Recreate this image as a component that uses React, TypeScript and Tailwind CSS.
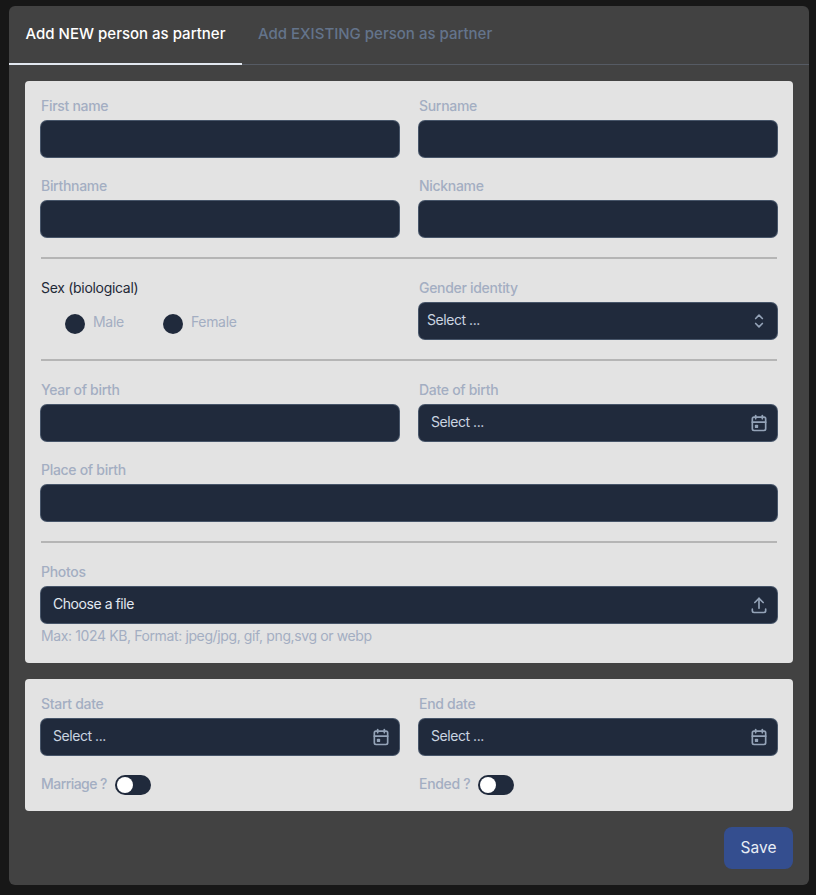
import { TbCalendarEvent, TbSelector, TbUpload } from "react-icons/tb"

const inputClass = "block h-9 w-full rounded-md bg-[#202a3c] ring-1 ring-[#475569]"

function Label({ children }: { children: React.ReactNode }) {
  return <label className="block h-5 text-sm leading-[18px] font-medium tracking-[-0.3px] text-[#a3aec2]">{children}</label>
}

function TextField({ label, className = "" }: { label: string; className?: string }) {
  return (
    <div className={className}>
      <Label>{label}</Label>
      <div className={`mt-1 ${inputClass}`} />
    </div>
  )
}

// select, date and file inputs all share this, only the icon changes
function IconField({
  label,
  text,
  icon,
  compact = false,
  light = false,
}: {
  label: string
  text: string
  icon: React.ReactNode
  compact?: boolean
  light?: boolean
}) {
  return (
    <div>
      <Label>{label}</Label>
      <div className={`mt-1 flex items-center justify-between pr-2 ${compact ? "pl-2" : "pl-3"} ${inputClass}`}>
        <span className={`pb-0.5 text-sm leading-5 tracking-[-0.45px] ${light ? "text-[#e2e8f0]" : "text-[#cbd5e1]"}`}>{text}</span>
        <span className="text-[#94a3b8]">{icon}</span>
      </div>
    </div>
  )
}

function Radio({ label }: { label: string }) {
  return (
    <div className="flex items-start gap-2">
      <span className="size-5 rounded-full bg-[#202a3c]" />
      <span className="-mt-0.5 text-sm leading-5 tracking-[-0.3px] text-[#a3aec2]">{label}</span>
    </div>
  )
}

function Toggle({ label, className = "" }: { label: string; className?: string }) {
  return (
    <div className="flex h-5 items-center gap-2">
      <span className={`h-5 text-sm leading-[18px] font-medium text-[#a3aec2] ${className}`}>{label}</span>
      <span className="flex h-5 w-9 items-center rounded-full bg-[#202a3c] px-0.5">
        <span className="size-4 rounded-full bg-white" />
      </span>
    </div>
  )
}

export default function App() {
  return (
    <div className="h-[895px] bg-[#171717] pt-1.5 pl-[9px] pr-[7px] font-['Inter',sans-serif]">
      <div className="h-[879px] rounded-md bg-[#424242]">
        <div className="flex h-[59px] border-b border-[#565b64]">
          <button className="h-[59px] w-[233px] border-b-2 border-[#e2e8f0] text-center text-[15px] font-medium text-white">
            Add NEW person as partner
          </button>
          <button className="h-[58px] pl-4 pb-0.5 text-[15px] font-medium text-[#64748b]">
            Add EXISTING person as partner
          </button>
        </div>

        <div className="flex flex-col gap-4 p-4">
          <div className="flex flex-col gap-5 rounded bg-[#e3e3e3] p-4">
            <div className="grid grid-cols-2 gap-5">
              <TextField label="First name" />
              <TextField label="Surname" />
              <TextField label="Birthname" />
              <TextField label="Nickname" />
            </div>
            <hr className="border-t-2 border-[#b5b5b5]" />
            <div className="grid grid-cols-2 gap-5">
              <div>
                <span className="block h-5 text-sm leading-[18px] tracking-[-0.3px] text-[#1f2937]">Sex (biological)</span>
                <div className="mt-[15px] flex gap-[39px] pl-6">
                  <Radio label="Male" />
                  <Radio label="Female" />
                </div>
              </div>
              <IconField label="Gender identity" text="Select ..." compact icon={<TbSelector size={20} />} />
            </div>
            <hr className="border-t-2 border-[#b5b5b5]" />
            <div className="grid grid-cols-2 gap-5">
              <TextField label="Year of birth" />
              <IconField label="Date of birth" text="Select ..." icon={<TbCalendarEvent size={20} />} />
              <TextField label="Place of birth" className="col-span-2" />
            </div>
            <hr className="border-t-2 border-[#b5b5b5]" />
            <div>
              <IconField label="Photos" text="Choose a file" light icon={<TbUpload size={20} />} />
              <p className="mt-1 h-5 text-sm leading-[18px] tracking-[-0.38px] text-[#a3aec2]">Max: 1024 KB, Format: jpeg/jpg, gif, png,svg or webp</p>
            </div>
          </div>

          <div className="grid grid-cols-2 gap-5 rounded bg-[#e3e3e3] p-4">
            <IconField label="Start date" text="Select ..." icon={<TbCalendarEvent size={20} />} />
            <IconField label="End date" text="Select ..." icon={<TbCalendarEvent size={20} />} />
            <Toggle label="Marriage ?" className="tracking-[-0.55px]" />
            <Toggle label="Ended ?" className="tracking-[-0.3px]" />
          </div>

          <div className="flex justify-end">
            <button className="h-[42px] w-[69px] rounded-lg bg-[#344e8f] text-[15.5px] text-[#e8edf5]">Save</button>
          </div>
        </div>
      </div>
    </div>
  )
}
